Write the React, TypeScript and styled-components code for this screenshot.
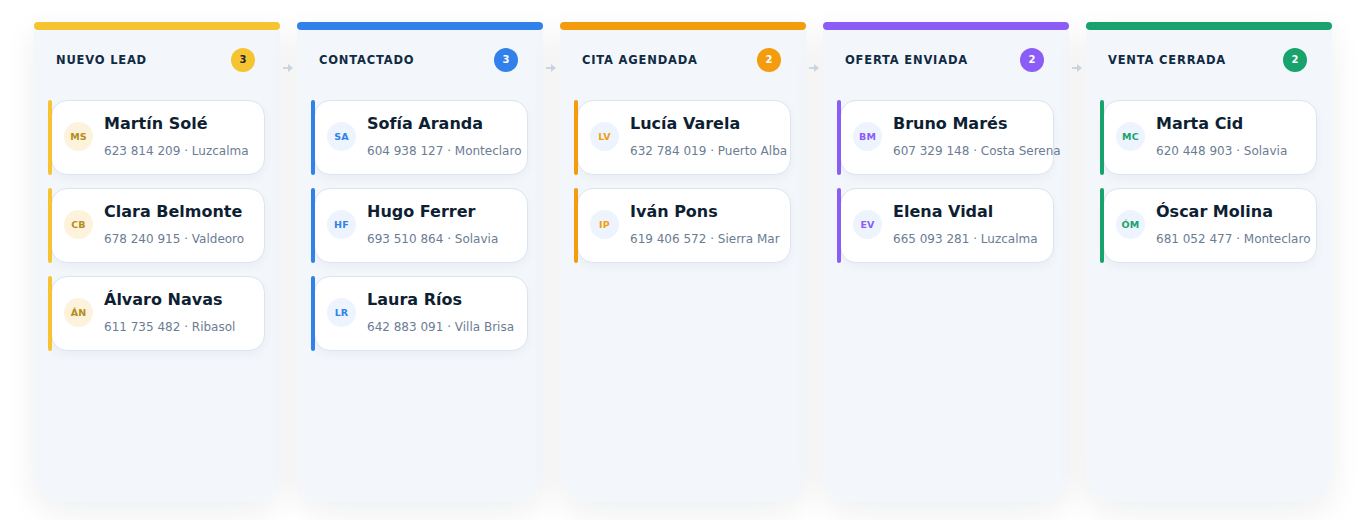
import React from 'react';
import styled, { createGlobalStyle } from 'styled-components';

const GlobalStyle = createGlobalStyle`
  html, body {
    margin: 0;
    padding: 0;
    background: #ffffff;
  }
  body {
    font-family: 'DejaVu Sans', 'Liberation Sans', sans-serif;
    color: #0f1f33;
  }
`;

type Lead = { initials: string; name: string; phone: string; city: string };
type Stage = {
  title: string;
  color: string;
  badgeText: string;
  avatarBg: string;
  avatarText: string;
  leads: Lead[];
};

const stages: Stage[] = [
  {
    title: 'Nuevo lead',
    color: '#f5c430',
    badgeText: '#1c2533',
    avatarBg: '#fdf3dc',
    avatarText: '#b48d1c',
    leads: [
      { initials: 'MS', name: 'Martín Solé', phone: '623 814 209', city: 'Luzcalma' },
      { initials: 'CB', name: 'Clara Belmonte', phone: '678 240 915', city: 'Valdeoro' },
      { initials: 'ÁN', name: 'Álvaro Navas', phone: '611 735 482', city: 'Ribasol' },
    ],
  },
  {
    title: 'Contactado',
    color: '#3281ea',
    badgeText: '#ffffff',
    avatarBg: '#eef4fd',
    avatarText: '#3281ea',
    leads: [
      { initials: 'SA', name: 'Sofía Aranda', phone: '604 938 127', city: 'Monteclaro' },
      { initials: 'HF', name: 'Hugo Ferrer', phone: '693 510 864', city: 'Solavia' },
      { initials: 'LR', name: 'Laura Ríos', phone: '642 883 091', city: 'Villa Brisa' },
    ],
  },
  {
    title: 'Cita agendada',
    color: '#f39c0e',
    badgeText: '#ffffff',
    avatarBg: '#eef4fd',
    avatarText: '#f39c0e',
    leads: [
      { initials: 'LV', name: 'Lucía Varela', phone: '632 784 019', city: 'Puerto Alba' },
      { initials: 'IP', name: 'Iván Pons', phone: '619 406 572', city: 'Sierra Mar' },
    ],
  },
  {
    title: 'Oferta enviada',
    color: '#8b5cf6',
    badgeText: '#ffffff',
    avatarBg: '#eef4fd',
    avatarText: '#8b5cf6',
    leads: [
      { initials: 'BM', name: 'Bruno Marés', phone: '607 329 148', city: 'Costa Serena' },
      { initials: 'EV', name: 'Elena Vidal', phone: '665 093 281', city: 'Luzcalma' },
    ],
  },
  {
    title: 'Venta cerrada',
    color: '#17a36b',
    badgeText: '#ffffff',
    avatarBg: '#eef4fd',
    avatarText: '#17a36b',
    leads: [
      { initials: 'MC', name: 'Marta Cid', phone: '620 448 903', city: 'Solavia' },
      { initials: 'ÓM', name: 'Óscar Molina', phone: '681 052 477', city: 'Monteclaro' },
    ],
  },
];

const Board = styled.main`
  display: flex;
  gap: 17px;
  padding: 22px 34px 18px;
`;

const Column = styled.section`
  position: relative;
  flex: none;
  width: 246px;
  height: 480px;
  display: flex;
  flex-direction: column;
  border-radius: 0 0 28px 28px;
  box-shadow: 0 10px 32px rgba(15, 23, 42, 0.07);
`;

const TopBar = styled.div<{ $color: string }>`
  height: 8px;
  border-radius: 4px;
  background: ${({ $color }) => $color};
`;

const Body = styled.div`
  flex: 1;
  background: #f3f6fb;
  border-radius: 0 0 28px 28px;
  padding: 17px 15px 0 14px;
`;

const Header = styled.header`
  display: flex;
  align-items: center;
  justify-content: space-between;
  height: 24px;
  padding: 1px 10px 0 8px;
`;

const Title = styled.h2`
  margin: 0;
  font-size: 11.5px;
  font-weight: 700;
  letter-spacing: 0.07em;
  text-transform: uppercase;
  color: #102a43;
`;

const Badge = styled.span<{ $bg: string; $fg: string }>`
  width: 24px;
  height: 24px;
  margin-top: -1px;
  border-radius: 50%;
  display: grid;
  place-items: center;
  font-size: 10px;
  font-weight: 700;
  background: ${({ $bg }) => $bg};
  color: ${({ $fg }) => $fg};
`;

const Arrow = styled.svg`
  position: absolute;
  right: -13px;
  top: 42px;
`;

const CardList = styled.div`
  display: flex;
  flex-direction: column;
  gap: 13px;
  margin-top: 28px;
`;

const CardRow = styled.div`
  display: flex;
  height: 75px;
`;

const Stripe = styled.span<{ $color: string }>`
  position: relative;
  z-index: 1;
  flex: none;
  width: 4px;
  border-radius: 2px;
  background: ${({ $color }) => $color};
`;

const Card = styled.article`
  flex: none;
  margin-left: -1px;
  width: 214px;
  box-sizing: border-box;
  display: flex;
  align-items: center;
  gap: 11px;
  padding: 0 0 3px 12px;
  background: #ffffff;
  border: 1px solid #dbe5f0;
  border-radius: 16px;
  box-shadow: 0 4px 10px rgba(15, 23, 42, 0.04);
`;

const Avatar = styled.span<{ $bg: string; $fg: string }>`
  flex: none;
  width: 29px;
  height: 29px;
  border-radius: 50%;
  display: grid;
  place-items: center;
  font-size: 9.5px;
  font-weight: 700;
  letter-spacing: 0.02em;
  background: ${({ $bg }) => $bg};
  color: ${({ $fg }) => $fg};
`;

const Info = styled.div`
  display: flex;
  flex-direction: column;
  gap: 9px;
  white-space: nowrap;
`;

const Name = styled.span`
  font-size: 16px;
  line-height: 20px;
  font-weight: 700;
  color: #0f1f33;
`;

const Meta = styled.span`
  font-size: 12px;
  line-height: 16px;
  color: #6b7c93;
`;

function StageColumn({ stage, last }: { stage: Stage; last: boolean }) {
  return (
    <Column>
      <TopBar $color={stage.color} />
      <Body>
        <Header>
          <Title>{stage.title}</Title>
          <Badge $bg={stage.color} $fg={stage.badgeText}>
            {stage.leads.length}
          </Badge>
        </Header>
        <CardList>
          {stage.leads.map((lead) => (
            <CardRow key={lead.name}>
              <Stripe $color={stage.color} />
              <Card>
                <Avatar $bg={stage.avatarBg} $fg={stage.avatarText}>
                  {lead.initials}
                </Avatar>
                <Info>
                  <Name>{lead.name}</Name>
                  <Meta>
                    {lead.phone} · {lead.city}
                  </Meta>
                </Info>
              </Card>
            </CardRow>
          ))}
        </CardList>
      </Body>
      {!last && (
        <Arrow width="10" height="8" viewBox="0 0 10 8" aria-hidden="true">
          <rect x="0" y="3" width="6" height="2" fill="#cfd9e4" />
          <path d="M5 0 L10 4 L5 8 Z" fill="#cfd9e4" />
        </Arrow>
      )}
    </Column>
  );
}

export default function App() {
  return (
    <>
      <GlobalStyle />
      <Board>
        {stages.map((stage, i) => (
          <StageColumn key={stage.title} stage={stage} last={i === stages.length - 1} />
        ))}
      </Board>
    </>
  );
}
